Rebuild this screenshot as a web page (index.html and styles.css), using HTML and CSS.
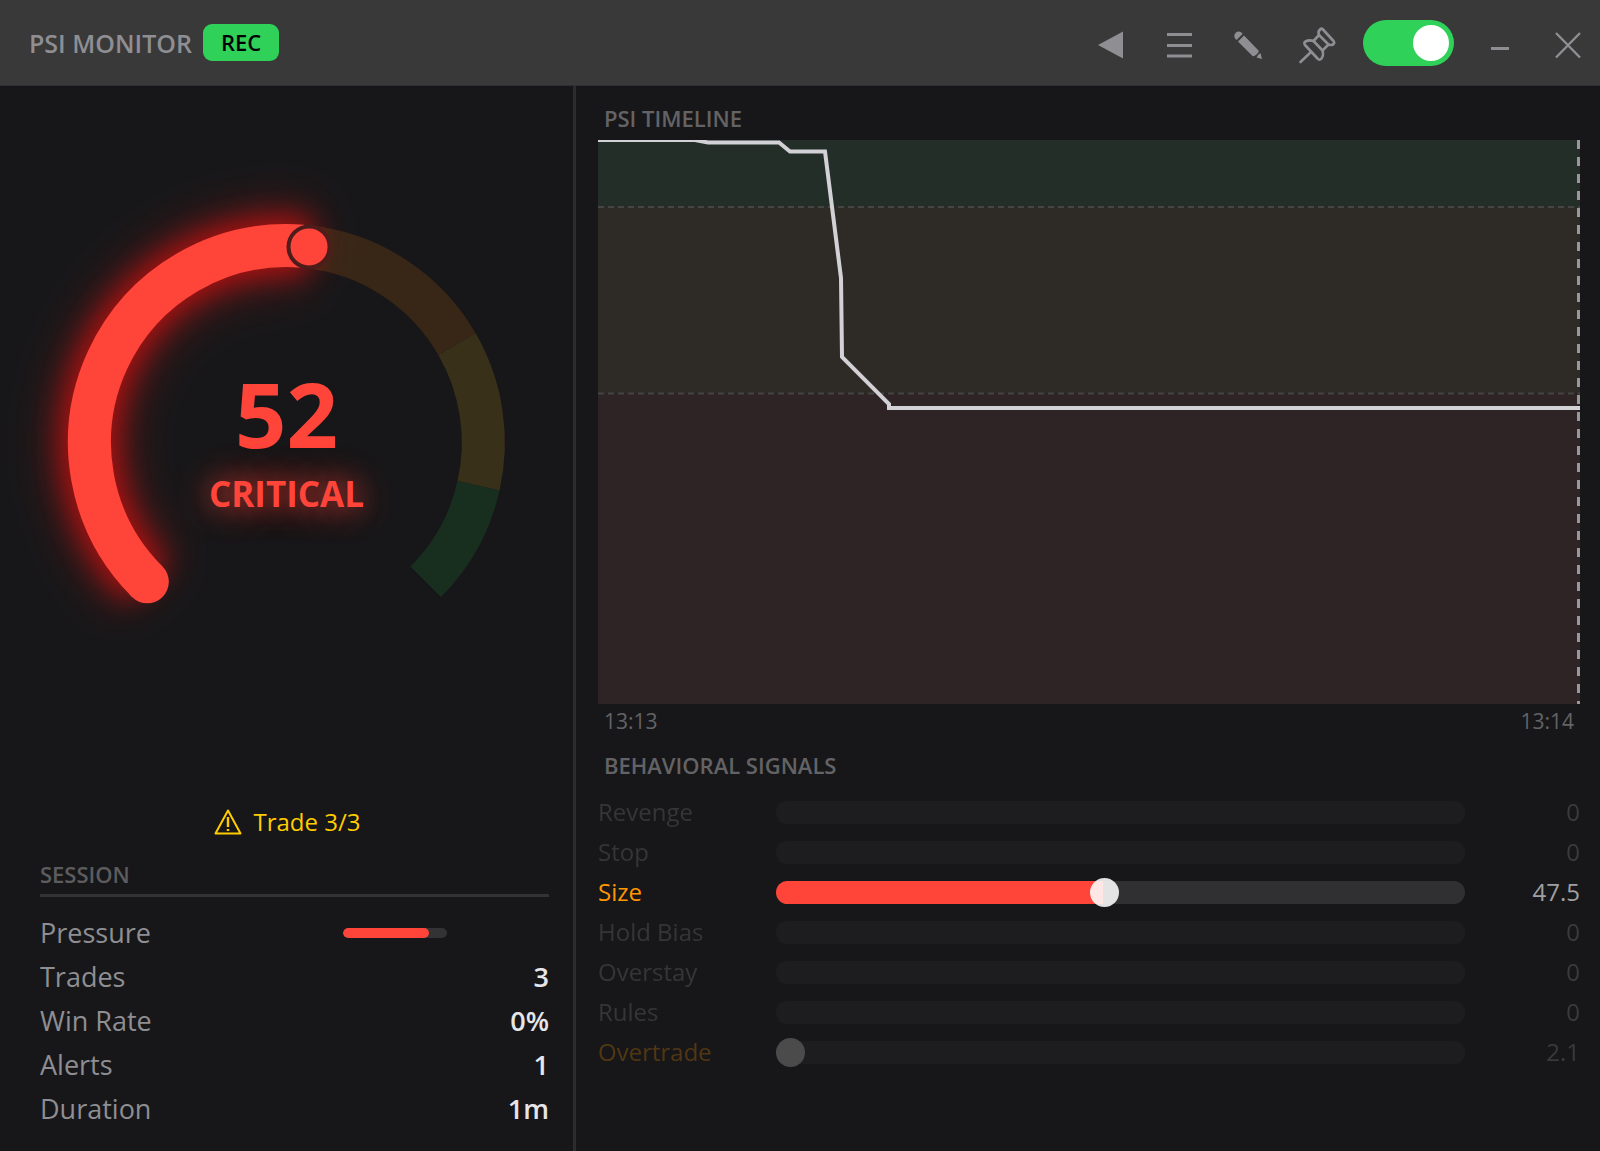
FILE: index.html
```html
<!DOCTYPE html>
<html lang="en">
<head>
  <meta charset="utf-8">
  <title>PSI Monitor</title>
  <meta name="viewport" content="width=device-width, initial-scale=1">
  <link rel="stylesheet" href="styles.css">
</head>
<body>
  <header class="titlebar">
    <h1 class="app-name">PSI MONITOR</h1>
    <span class="rec">REC</span>
    <div class="tools">
      <button class="tool" aria-label="Collapse">
        <svg viewBox="0 0 40 40"><path d="M5 22 L30 8.500 V35.500 Z" fill="currentColor"/></svg>
      </button>
      <button class="tool" aria-label="Menu">
        <svg viewBox="0 0 40 40"><path d="M6 11.500H31M6 22.500H31M6 33H31" stroke="currentColor" stroke-width="3"/></svg>
      </button>
      <button class="tool" aria-label="Edit">
        <svg viewBox="0 0 40 40" fill="currentColor">
          <path d="M6.500 16 A4.300 4.300 0 0 1 13 10 L13.500 11 L7.500 17 Z"/>
          <path d="M9 18.500 L15 12.500 L29.500 27.500 Q30.500 29 27.500 31.500 Q25 34 23.500 33 Z"/>
          <path d="M31.500 30 L33 36 L27.500 34.500 Q29 31 31.500 30 Z"/>
        </svg>
      </button>
      <button class="tool" aria-label="Pin">
        <svg viewBox="0 0 40 40" fill="none" stroke="currentColor" stroke-width="2.600" stroke-linejoin="round" stroke-linecap="round">
          <path d="M23 6.500 Q24.500 5 26 6.500 L36.500 18 Q38 20 36 21.500 Q34 22.500 31.500 21.500 L25.500 27.500 Q27 32 24.500 35.500 Q22.500 38 20.500 35.500 L8 22 Q6.500 19.500 8.500 18.500 Q12 16.500 16.500 18 L22 12 Q20.500 9 23 6.500 Z"/>
          <path d="M22 12 L31.500 21.500 M16.500 18 L25.500 27.500 M14 29 L3.500 39"/>
        </svg>
      </button>
      <input class="toggle" type="checkbox" aria-label="Monitoring" checked>
      <button class="tool" aria-label="Minimize">
        <svg viewBox="0 0 40 40"><path d="M11 25.500H29" stroke="currentColor" stroke-width="3"/></svg>
      </button>
      <button class="tool" aria-label="Close">
        <svg viewBox="0 0 40 40"><path d="M8 10 L32 34.500 M32 10 L8 34.500" stroke="currentColor" stroke-width="2.400"/></svg>
      </button>
    </div>
  </header>

  <main class="panels">
    <section class="left">
      <div class="gauge">
        <svg class="gauge-dial" viewBox="0 0 572 572">
          <defs>
            <filter id="glow" x="-60%" y="-60%" width="220%" height="220%" color-interpolation-filters="sRGB">
              <feGaussianBlur stdDeviation="24"/>
            </filter>
            <filter id="glow-near" x="-40%" y="-40%" width="180%" height="180%" color-interpolation-filters="sRGB">
              <feGaussianBlur stdDeviation="14"/>
            </filter>
          </defs>
          <g fill="none" stroke-width="43">
            <path class="band-orange" d="M308.500 90.800 A196.500 196.500 0 0 1 456.200 187.800"/>
            <path class="band-yellow" d="M456.200 187.800 A196.500 196.500 0 0 1 477.700 329.200"/>
            <path class="band-green" d="M477.700 329.200 A196.500 196.500 0 0 1 425 425"/>
            <path class="arc arc-far" filter="url(#glow)" d="M147 425 A196.500 196.500 0 0 1 308.500 90.800"/>
            <path class="arc arc-near" filter="url(#glow-near)" d="M147 425 A196.500 196.500 0 0 1 308.500 90.800"/>
            <path class="arc" d="M147 425 A196.500 196.500 0 0 1 302 90.100"/>
          </g>
          <circle class="arc-start" cx="147" cy="425" r="21.500"/>
          <circle class="knob" cx="308.500" cy="90.800" r="20.500"/>
        </svg>
        <div class="gauge-text">
          <div class="score">52</div>
          <div class="level">CRITICAL</div>
        </div>
      </div>

      <div class="alert">
        <svg class="alert-icon" viewBox="0 0 28 26" fill="none" stroke="currentColor" stroke-width="2" stroke-linejoin="round">
          <path d="M14 1.500 L26.500 24.500 H1.500 Z"/>
          <path d="M14 8 V18 M14 20 V22" stroke-width="2.400"/>
        </svg>
        <span>Trade 3/3</span>
      </div>

      <h2 class="session-title">SESSION</h2>
      <dl class="session">
        <div class="stat"><dt>Pressure</dt><dd class="pressure"><span class="pressure-fill" style="width:83%"></span></dd></div>
        <div class="stat"><dt>Trades</dt><dd>3</dd></div>
        <div class="stat"><dt>Win Rate</dt><dd>0%</dd></div>
        <div class="stat"><dt>Alerts</dt><dd>1</dd></div>
        <div class="stat"><dt>Duration</dt><dd>1m</dd></div>
      </dl>
    </section>

    <section class="right">
      <h2 class="section-title">PSI TIMELINE</h2>
      <svg class="chart" viewBox="0 0 982 564" preserveAspectRatio="none">
        <rect class="zone-green" width="982" height="67"/>
        <rect class="zone-amber" y="67" width="982" height="186"/>
        <rect class="zone-red" y="253" width="982" height="311"/>
        <path class="limit" d="M0 67H982M0 253.500H982"/>
        <path class="now" d="M980.500 0V564"/>
        <path class="psi" d="M0 0H97L110 2.500H181L192 11.500H227L243 138L244 217L291 264V268H982"/>
      </svg>
      <div class="times"><span>13:13</span><span>13:14</span></div>

      <h2 class="section-title">BEHAVIORAL SIGNALS</h2>
      <div class="signals">
        <div class="signal idle">
          <label for="revenge">Revenge</label>
          <input class="bar empty" type="range" id="revenge" value="0">
          <output for="revenge">0</output>
        </div>
        <div class="signal idle">
          <label for="stop">Stop</label>
          <input class="bar empty" type="range" id="stop" value="0">
          <output for="stop">0</output>
        </div>
        <div class="signal warn">
          <label for="size">Size</label>
          <input class="bar" type="range" id="size" step="0.1" value="47.5" style="--fill:47.5%">
          <output for="size">47.5</output>
        </div>
        <div class="signal idle">
          <label for="hold">Hold Bias</label>
          <input class="bar empty" type="range" id="hold" value="0">
          <output for="hold">0</output>
        </div>
        <div class="signal idle">
          <label for="overstay">Overstay</label>
          <input class="bar empty" type="range" id="overstay" value="0">
          <output for="overstay">0</output>
        </div>
        <div class="signal idle">
          <label for="rules">Rules</label>
          <input class="bar empty" type="range" id="rules" value="0">
          <output for="rules">0</output>
        </div>
        <div class="signal warn idle">
          <label for="overtrade">Overtrade</label>
          <input class="bar" type="range" id="overtrade" value="0">
          <output for="overtrade">2.1</output>
        </div>
      </div>
    </section>
  </main>
</body>
</html>
```
FILE: styles.css
```css
* { box-sizing:border-box; }
body { margin:0; min-height:100vh; display:flex; flex-direction:column;
       background:#171719; color:#8e8e93; font-family:'Open Sans','Noto Sans',sans-serif; }
h1, h2, dl, dd { margin:0; }

/* title bar */
.titlebar { display:flex; align-items:center; height:86px; padding:0 12px 0 29px;
            background:#393939; border-bottom:1px solid #303032; }
.app-name { font-size:25px; font-weight:600; }
.rec { margin-left:11px; padding:0 18px; font-size:22px; line-height:37px; font-weight:600;
       color:#000; background:#30d158; border-radius:9px; }
.tools { display:flex; align-items:center; gap:28px; margin-left:auto; }
.tool { width:40px; height:40px; padding:0; border:0; background:none; color:#8e8e93; cursor:pointer; }
.tool svg { display:block; width:40px; height:40px; overflow:visible; }
.toggle { appearance:none; width:91px; height:46px; margin:0 -2px; padding:5px; border-radius:23px;
          background:#555; cursor:pointer; display:flex; }
.toggle::before { content:""; width:36px; height:36px; border-radius:50%; background:#fff; }
.toggle:checked { background:#30d158; justify-content:flex-end; }

.panels { flex:1; display:grid; grid-template-columns:36% 1fr; }

/* left side */
.left { display:flex; flex-direction:column; padding:0 24px 20px 40px; border-right:3px solid #2c2c2e; }
.gauge { display:grid; margin:70px -24px 0 -40px; }
.gauge-dial, .gauge-text { grid-area:1/1; }
.gauge-dial { width:100%; overflow:visible; }
.gauge-text { align-self:center; text-align:center; color:#ff453a; font-weight:700; z-index:1; }
.score { font-size:90px; line-height:92px; }
.level { margin-top:11px; font-size:35px; line-height:48px; text-shadow:0 0 36px #ff453a, 0 0 24px #ff453a60; }
.band-orange { stroke:#382717; }
.band-yellow { stroke:#383019; }
.band-green { stroke:#182f20; }
.arc { stroke:#ff453a; }
.arc-far { opacity:.3; stroke:#e01818; stroke-width:76; }
.arc-near { opacity:.75; stroke:#d00f0f; stroke-width:56; }
.arc-start { fill:#ff453a; }
.knob { fill:#ff453a; stroke:#4f1c1c; stroke-width:4; }

.alert { display:flex; justify-content:center; align-items:center; gap:11px; margin:auto -26px 0 -40px;
         font-size:24px; line-height:34px; font-weight:500; color:#ffcc00; }
.alert-icon { width:28px; height:26px; }
.session-title { margin-top:18px; padding-bottom:3px; border-bottom:3px solid #333335;
                 font-size:22px; line-height:34px; font-weight:600; color:#5c5c5f; }
.session { margin-top:14px; }
.stat { display:flex; justify-content:space-between; align-items:center; font-size:27px; line-height:44px; }
.stat dd { font-weight:600; color:#e5e5ea; }
.stat .pressure { width:104px; height:10px; margin-right:102px; background:#333335; border-radius:5px; overflow:hidden; }
.pressure-fill { display:block; height:100%; border-radius:5px; background:#ff453a; }

/* right side */
.right { display:flex; flex-direction:column; padding:13px 20px 0 22px; }
.section-title { padding-left:6px; font-size:22px; line-height:38px; font-weight:600; color:#636366; }
.chart { width:100%; height:564px; margin-top:3px; }
.zone-green { fill:#232e28; }
.zone-amber { fill:#2e2a25; }
.zone-red { fill:#2e2325; }
.limit { fill:none; stroke:#454545; stroke-width:2; stroke-dasharray:6 4; }
.now { stroke:#98989a; stroke-width:3; stroke-dasharray:9 8; }
.psi { fill:none; stroke:#d1d1d6; stroke-width:4; }
.times { display:flex; justify-content:space-between; padding:0 6px; font-size:21px; line-height:34px; color:#636366; }
.times + .section-title { margin-top:8px; }
.signals { margin-top:8px; }
.signal { display:grid; grid-template-columns:178px 1fr 115px; align-items:center;
          font-size:24px; line-height:40px; }
.signal output { text-align:right; color:#a0a0a4; }
.warn label { color:#ff9500; }
.idle { opacity:.25; }
.bar { --fill:0%; appearance:none; width:100%; height:23px; margin:0; border-radius:12px;
       background:linear-gradient(to right, #ff453a var(--fill), #303032 var(--fill)); }
.bar::-webkit-slider-thumb { appearance:none; width:29px; height:29px; border-radius:50%; background:#fff; opacity:.87; }
.empty::-webkit-slider-thumb { visibility:hidden; }
```
